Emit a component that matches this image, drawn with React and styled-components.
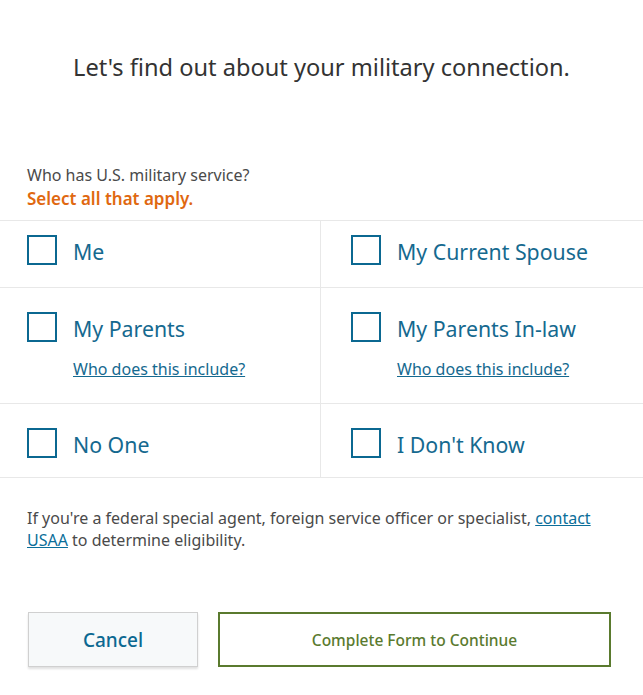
import React, { useState } from 'react';
import styled, { createGlobalStyle } from 'styled-components';

const GlobalStyle = createGlobalStyle`
  html, body {
    margin: 0;
    padding: 0;
    background: #ffffff;
  }
  body {
    font-family: "Noto Sans", "Open Sans", sans-serif;
    -webkit-font-smoothing: antialiased;
  }
`;

const options = [
  { id: 'me', label: 'Me' },
  { id: 'spouse', label: 'My Current Spouse' },
  { id: 'parents', label: 'My Parents', help: true },
  { id: 'inlaw', label: 'My Parents In-law', help: true },
  { id: 'none', label: 'No One' },
  { id: 'unknown', label: "I Don't Know" },
];

const App = () => {
  const [checked, setChecked] = useState({});

  const toggle = (id) => {
    setChecked((prev) => ({ ...prev, [id]: !prev[id] }));
  };

  const rows = [options.slice(0, 2), options.slice(2, 4), options.slice(4, 6)];

  return (
    <Page>
      <GlobalStyle />
      <Title>Let's find out about your military connection.</Title>

      <Question>Who has U.S. military service?</Question>
      <Hint>Select all that apply.</Hint>

      <Grid>
        {rows.map((row, i) => (
          <Row key={i}>
            {row.map((opt, j) => (
              <Cell key={opt.id} $right={j === 1} $first={i === 0}>
                <Option onClick={() => toggle(opt.id)}>
                  <Box $checked={!!checked[opt.id]} />
                  <Label>{opt.label}</Label>
                </Option>
                {opt.help && <HelpLink href="#">Who does this include?</HelpLink>}
              </Cell>
            ))}
          </Row>
        ))}
      </Grid>

      <Note>
        If you're a federal special agent, foreign service officer or specialist,{' '}
        <NoteLink href="#">contact USAA</NoteLink> to determine eligibility.
      </Note>

      <Actions>
        <CancelButton>Cancel</CancelButton>
        <ContinueButton>Complete Form to Continue</ContinueButton>
      </Actions>
    </Page>
  );
};

const Page = styled.div`
  width: 643px;
  height: 695px;
  box-sizing: border-box;
  padding-top: 50px;
  color: #4a4a4a;
  overflow: hidden;
`;

const Title = styled.h1`
  margin: 0 0 80px;
  text-align: center;
  font-size: 23.6px;
  font-weight: 400;
  line-height: 34px;
  color: #333333;
`;

const Question = styled.div`
  padding-left: 27px;
  font-size: 16px;
  line-height: 22px;
  color: #4a4a4a;
`;

const Hint = styled.div`
  padding-left: 27px;
  margin-top: 2px;
  font-size: 17px;
  line-height: 22px;
  font-weight: 600;
  color: #e06810;
`;

const Grid = styled.div`
  margin-top: 10px;
  border-top: 1px solid #e8e8e8;
`;

const Row = styled.div`
  display: grid;
  grid-template-columns: 320px 1fr;
  border-bottom: 1px solid #e8e8e8;
`;

const Cell = styled.div`
  display: flex;
  flex-direction: column;
  padding-top: ${(p) => (p.$first ? '14px' : '24px')};
  padding-bottom: ${(p) => (p.$first ? '22px' : '19px')};
  padding-left: ${(p) => (p.$right ? '30px' : '27px')};
  padding-right: 20px;
  border-left: ${(p) => (p.$right ? '1px solid #e8e8e8' : 'none')};
`;

const Option = styled.label`
  display: flex;
  align-items: center;
  gap: 16px;
  cursor: pointer;
`;

const Box = styled.span`
  width: 30px;
  height: 30px;
  box-sizing: border-box;
  border: 2px solid #0b6891;
  background: ${(p) => (p.$checked ? '#0b6891' : '#ffffff')};
  flex-shrink: 0;
`;

const Label = styled.span`
  font-size: 21.3px;
  line-height: 26px;
  padding-top: 4px;
  color: #15698f;
`;

const HelpLink = styled.a`
  margin: 17px 0 5px 46px;
  font-size: 16px;
  line-height: 20px;
  color: #15698f;
  text-decoration: underline;
  align-self: flex-start;
`;

const Note = styled.p`
  margin: 29px 0 0;
  padding: 0 40px 0 27px;
  font-size: 16px;
  line-height: 22px;
  color: #4a4a4a;
`;

const NoteLink = styled.a`
  color: #0b6e99;
  text-decoration: underline;
`;

const Actions = styled.div`
  display: flex;
  gap: 20px;
  padding: 0 32px 0 28px;
  margin-top: 61px;
`;

const CancelButton = styled.button`
  width: 170px;
  height: 55px;
  background: #f7f9fa;
  border: 1px solid #d0d0d0;
  box-shadow: 0 2px 2px rgba(0, 0, 0, 0.12);
  font-family: "Noto Sans", sans-serif;
  font-size: 19px;
  font-weight: 500;
  color: #0b6891;
  cursor: pointer;
`;

const ContinueButton = styled.button`
  flex: 1;
  height: 55px;
  background: #ffffff;
  border: 2px solid #5a7a2e;
  font-family: "Noto Sans", sans-serif;
  font-size: 15.5px;
  font-weight: 500;
  color: #5a7a2e;
  cursor: pointer;
`;

export default App;
